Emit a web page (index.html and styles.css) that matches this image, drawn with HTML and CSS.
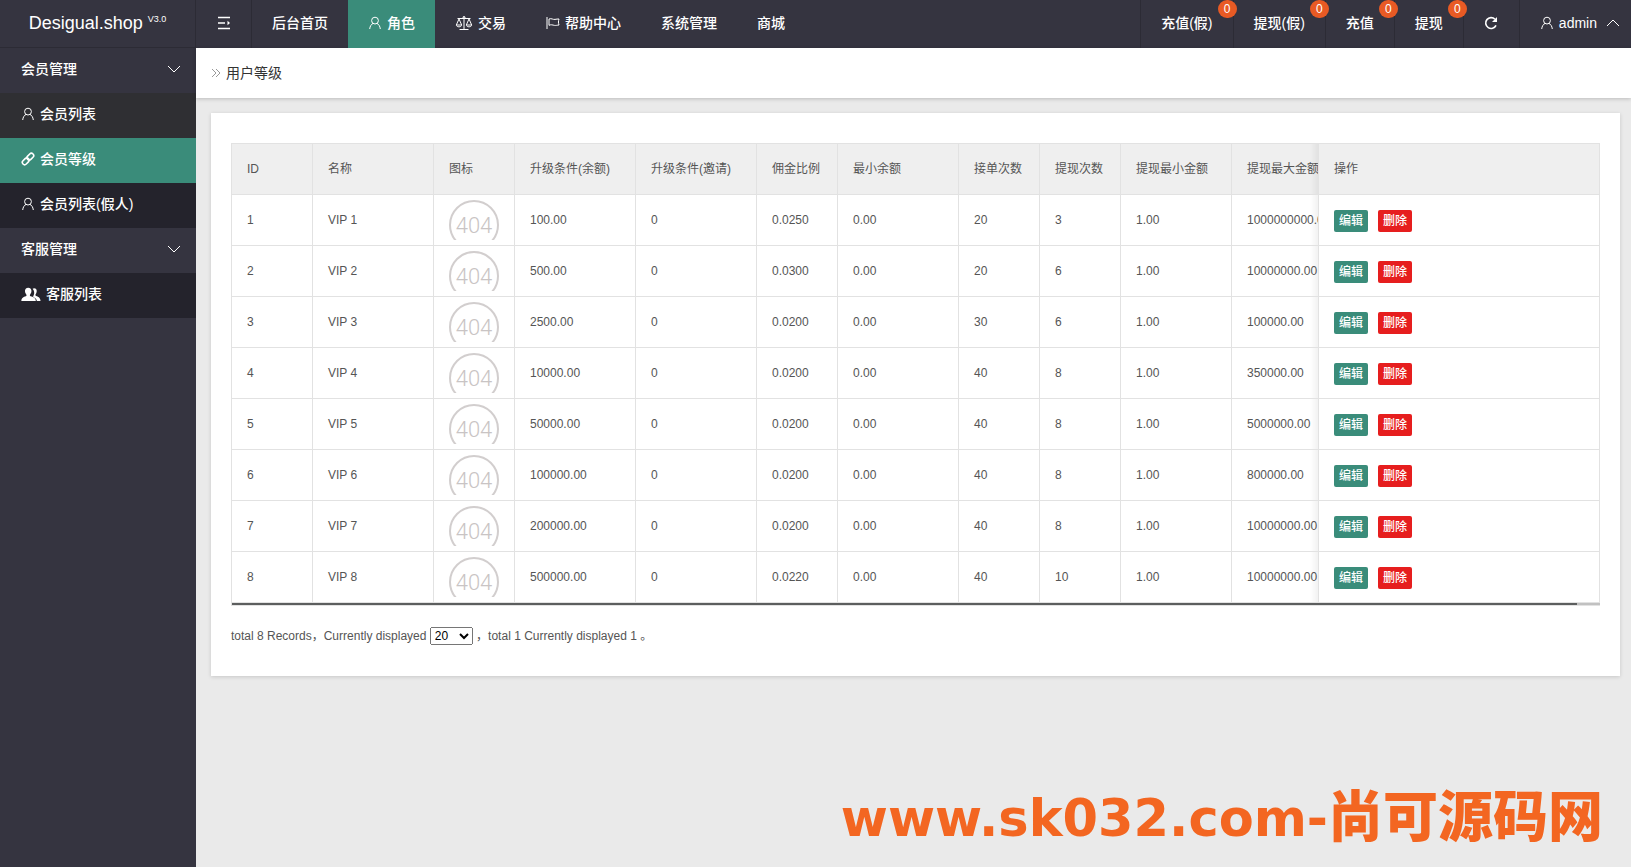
FILE: index.html
```
<!DOCTYPE html>
<html lang="zh-CN">
<head>
<meta charset="utf-8">
<title>用户等级</title>
<link rel="stylesheet" href="styles.css">
<script src="app.js" defer></script>
</head>
<body>
<svg class="defs" aria-hidden="true">
  <symbol id="user" viewBox="0 0 14 14"><circle cx="7" cy="4.600" r="3.400"/><path d="M5.200 7.300C3.200 8.200 2 10.300 1.700 13M8.800 7.300c2 .9 3.200 3 3.500 5.700"/></symbol>
  <symbol id="link" viewBox="0 0 14 14"><rect x="-3.800" y="-2.300" width="7.600" height="4.600" rx="2.300" transform="translate(9.300 4.700) rotate(-45)"/><rect x="-3.800" y="-2.300" width="7.600" height="4.600" rx="2.300" transform="translate(4.700 9.300) rotate(-45)"/></symbol>
  <symbol id="group" viewBox="0 0 18 14"><path d="M10.500 1.700c1-1 3.600-.8 3.800 1.600.1 1.500-.3 2.600-1 3.500-.3.800 0 1.500.6 1.700 1.500.6 3.800 1.300 4 4.500h-3.400c-.3-2-1.700-2.900-3.300-3.500-.3-.3-.3-.6 0-1 .9-1.600 1.500-4.500-.7-6.800z"/><path d="M0 13c.1-3 2-3.600 4.200-4.300.7-.4.8-1 .4-1.700-.8-1-1.300-2.200-1.200-3.700C3.600 1.500 4.700.6 6.400.6s2.900 1 3 2.700c.1 1.500-.4 2.700-1.200 3.700-.4.7-.3 1.300.4 1.700C11 9.400 13.400 10 13.500 13z"/></symbol>
  <symbol id="scale" viewBox="0 0 18 16"><path d="M2.500 3.500h13M9 1.500v12.800M4.500 14.500h9M4 4 1.300 10h5.400zM14 4l-2.700 6h5.400zM1.300 10.300c.6 2 4.800 2 5.400 0M11.300 10.300c.6 2 4.800 2 5.400 0"/><circle cx="9" cy="2.500" r="1"/></symbol>
  <symbol id="flag" viewBox="0 0 14 14"><path d="M1 1v12M3 3c2.500-1 4 .8 6 .4 1.500 0 2.500-.7 4-.4-.7 2-.7 4 0 6-2 .2-3 .6-4.500.4C6.500 9 5 8.300 3 9.300z"/></symbol>
  <symbol id="menu" viewBox="0 0 14 14"><path d="M1 1.500h12M1 7h7M1 12.500h12"/><path d="M10.500 4.800v4.400L13 7z" fill="currentColor" stroke="none"/></symbol>
  <symbol id="refresh" viewBox="0 0 14 14"><path d="M12 9.300A5.400 5.400 0 1 1 11 3.300"/><path d="M13 1v5H8z" fill="currentColor" stroke="none"/></symbol>
  <symbol id="down" viewBox="0 0 14 14"><path d="M1 4l6 6 6-6"/></symbol>
  <symbol id="up" viewBox="0 0 14 14"><path d="M1 10l6-6 6 6"/></symbol>
  <symbol id="raquo" viewBox="0 0 10 10"><path d="M1 1l4 4-4 4M5 1l4 4-4 4"/></symbol>
  <symbol id="missing" viewBox="0 0 50 40"><circle cx="25" cy="25" r="24" stroke-width="2"/></symbol>
</svg>
<header class="topbar">
  <a class="logo" href="#">Desigual.shop <sup>V3.0</sup></a>
  <nav class="nav">
    <button class="nav-item toggle" aria-label="菜单"><svg class="icon bold"><use href="#menu"/></svg></button>
    <a class="nav-item" href="#">后台首页</a>
    <a class="nav-item active" href="#"><svg class="icon"><use href="#user"/></svg>角色</a>
    <a class="nav-item" href="#"><svg class="icon wide"><use href="#scale"/></svg>交易</a>
    <a class="nav-item" href="#"><svg class="icon"><use href="#flag"/></svg>帮助中心</a>
    <a class="nav-item" href="#">系统管理</a>
    <a class="nav-item" href="#">商城</a>
  </nav>
  <nav class="nav tools">
    <a class="nav-item" href="#">充值(假)<span class="badge">0</span></a>
    <a class="nav-item" href="#">提现(假)<span class="badge">0</span></a>
    <a class="nav-item" href="#">充值<span class="badge">0</span></a>
    <a class="nav-item" href="#">提现<span class="badge">0</span></a>
    <button class="nav-item toggle" aria-label="刷新"><svg class="icon bold"><use href="#refresh"/></svg></button>
    <a class="nav-item account" href="#"><svg class="icon"><use href="#user"/></svg>admin<svg class="icon caret"><use href="#up"/></svg></a>
  </nav>
</header>
<div class="layout">
  <aside class="sidebar">
    <button class="group-head">会员管理<svg class="icon"><use href="#down"/></svg></button>
    <a class="side-link hover" href="#"><svg class="icon"><use href="#user"/></svg>会员列表</a>
    <a class="side-link active" href="#"><svg class="icon bold"><use href="#link"/></svg>会员等级</a>
    <a class="side-link" href="#"><svg class="icon"><use href="#user"/></svg>会员列表(假人)</a>
    <button class="group-head">客服管理<svg class="icon"><use href="#down"/></svg></button>
    <a class="side-link" href="#"><svg class="icon people"><use href="#group"/></svg>客服列表</a>
  </aside>
  <main class="main">
    <div class="page-title"><svg class="icon mini"><use href="#raquo"/></svg><h1>用户等级</h1></div>
    <section class="card">
      <div class="grid">
        <div class="scroller">
          <table>
            <colgroup><col class="s"><col class="l"><col class="s"><col class="l"><col class="l"><col class="s"><col class="l"><col class="s"><col class="s"><col class="m"><col class="m"><col></colgroup>
            <thead><tr><th>ID</th><th>名称</th><th>图标</th><th>升级条件(余额)</th><th>升级条件(邀请)</th><th>佣金比例</th><th>最小余额</th><th>接单次数</th><th>提现次数</th><th>提现最小金额</th><th>提现最大金额</th><th class="fixed">操作</th></tr></thead>
            <tbody id="rows"></tbody>
          </table>
        </div>
        <div class="track"><div class="thumb"></div></div>
      </div>
      <div class="pager"><label for="size">total 8 Records，Currently displayed</label> <select id="size"><option>20</option><option>50</option></select> ，total 1 Currently displayed 1 。</div>
    </section>
  </main>
</div>
<div class="watermark">www.sk032.com-<span>尚可源码网</span></div>
</body>
</html>
```
FILE: styles.css
```
* { box-sizing: border-box; }
body {
  margin: 0;
  min-height: 100vh;
  display: flex;
  flex-direction: column;
  background: #eaeaea;
  color: #333;
  font: 14px/20px "Liberation Sans", "Noto Sans CJK SC", sans-serif;
}
a { color: inherit; text-decoration: none; }
button { border: 0; font: inherit; color: inherit; background: none; cursor: pointer; }
.defs { position: absolute; width: 0; height: 0; }
.icon { width: 14px; height: 14px; flex: none; fill: none; stroke: currentColor; stroke-width: 1; }
.icon.bold { stroke-width: 1.6; }
.icon.wide { width: 18px; height: 16px; }
.icon.people { width: 20px; height: 15px; fill: currentColor; stroke: none; }
.icon.mini { width: 10px; height: 10px; }

.topbar { display: flex; height: 48px; background: #353440; color: #fff; }
.logo {
  width: 196px;
  padding-top: 13px;
  border-right: 1px solid #2c2b35;
  border-bottom: 1px solid #2c2b35;
  text-align: center;
  font-size: 18px;
}
.logo sup { font-size: 9px; line-height: 9px; }
.nav { display: flex; }
.nav-item {
  position: relative;
  display: flex;
  align-items: center;
  gap: 5px;
  padding: 0 20px 3px;
  font-weight: 500;
}
.nav-item.active { background: #3a8c7a; }
.toggle { width: 56px; justify-content: center; border-right: 1px solid #2c2b35; }
.tools { margin-left: auto; }
.tools .nav-item { border-left: 1px solid #2c2b35; border-right: 0; }
.tools .account { padding: 0 11px 3px 20px; }
.caret { margin-left: 4px; }
.badge {
  position: absolute;
  top: 0;
  right: -4px;
  z-index: 1;
  width: 19px;
  height: 18px;
  border-radius: 9px;
  background: #e85a24;
  text-align: center;
  font-size: 12px;
  line-height: 18px;
}

.layout { display: flex; flex: 1; }
.sidebar { width: 196px; flex: none; background: #353440; color: #fff; }
.group-head, .side-link {
  display: flex;
  align-items: center;
  width: 100%;
  height: 45px;
  padding: 0 21px 3px;
  font-weight: 500;
}
.group-head { justify-content: space-between; padding-right: 15px; }
.side-link { gap: 5px; background: #24232c; }
.side-link.hover { background: #2f2f33; }
.side-link.active { background: #3a8c7a; }

.main { flex: 1; min-width: 0; }
.page-title {
  display: flex;
  align-items: center;
  gap: 5px;
  height: 50px;
  padding: 0 15px;
  background: #fff;
  box-shadow: 0 1px 4px rgba(0, 0, 0, .2);
}
.page-title .icon { color: #999; }
.page-title h1 { margin: 0; font-size: 14px; font-weight: 400; }
.card {
  margin: 15px 11px 15px 15px;
  padding: 30px 20px;
  background: #fff;
  box-shadow: 0 1px 4px rgba(0, 0, 0, .15);
  color: #555;
  font-size: 12px;
}
.grid { border: 1px solid #e2e2e2; border-right: 0; }
.scroller { overflow-x: auto; scrollbar-width: none; }
table { width: 100%; min-width: 1393px; table-layout: fixed; border-spacing: 0; }
.s { width: 81px; }
.m { width: 111px; }
.l { width: 121px; }
th, td {
  height: 51px;
  padding: 0 15px;
  border-right: 1px solid #e2e2e2;
  border-bottom: 1px solid #e2e2e2;
  text-align: left;
  font-weight: 400;
  white-space: nowrap;
  background: #fff;
}
th { background: #efefef; }
.fixed { position: sticky; right: 0; border-left: 1px solid #e2e2e2; }
.fixed::before {
  content: "";
  position: absolute;
  top: 0;
  bottom: 0;
  left: -9px;
  width: 8px;
  background: linear-gradient(to left, rgba(0, 0, 0, .05), transparent);
}
.missing { display: block; width: 50px; height: 40px; fill: none; stroke: #d2cece; }
.missing text { fill: #c9c4c4; stroke: none; font: 300 22px Roboto, sans-serif; text-anchor: middle; }
.actions { display: flex; gap: 10px; padding-top: 2px; }
.actions button {
  height: 22px;
  padding: 0 5px;
  border-radius: 2px;
  background: #3a8c7a;
  color: #fff;
  font-size: 12px;
  font-weight: 500;
  line-height: 20px;
}
.actions .delete { background: #e61e1e; }
.track { height: 2px; background: #c1c1c1; }
.thumb { width: 98.3%; height: 2px; background: #5c5e5e; }
.pager { margin-top: 20px; }
.pager select { width: 43px; height: 18px; padding: 0; font: 12px "Liberation Sans", sans-serif; }
.watermark {
  position: fixed;
  right: 28px;
  bottom: 18px;
  color: #f36621;
  font: bold 51px/60px "DejaVu Sans", sans-serif;
  white-space: nowrap;
}
.watermark span { font: 900 55px/60px "Noto Sans CJK SC", sans-serif; }
```
FILE: app.js
```
const levels = [
  ["100.00", "0.0250", 20, 3, "1000000000.00"],
  ["500.00", "0.0300", 20, 6, "10000000.00"],
  ["2500.00", "0.0200", 30, 6, "100000.00"],
  ["10000.00", "0.0200", 40, 8, "350000.00"],
  ["50000.00", "0.0200", 40, 8, "5000000.00"],
  ["100000.00", "0.0200", 40, 8, "800000.00"],
  ["200000.00", "0.0200", 40, 8, "10000000.00"],
  ["500000.00", "0.0220", 40, 10, "10000000.00"],
];
const picture = '<svg class="missing"><use href="#missing"/><text x="25" y="33">404</text></svg>';
const actions = '<div class="actions"><button>编辑</button><button class="delete">删除</button></div>';
document.getElementById("rows").innerHTML = levels.map(([balance, rate, orders, draws, max], i) => {
  const cells = [i + 1, `VIP ${i + 1}`, picture, balance, 0, rate, "0.00", orders, draws, "1.00", max];
  return `<tr>${cells.map(c => `<td>${c}</td>`).join("")}<td class="fixed">${actions}</td></tr>`;
}).join("");
```
